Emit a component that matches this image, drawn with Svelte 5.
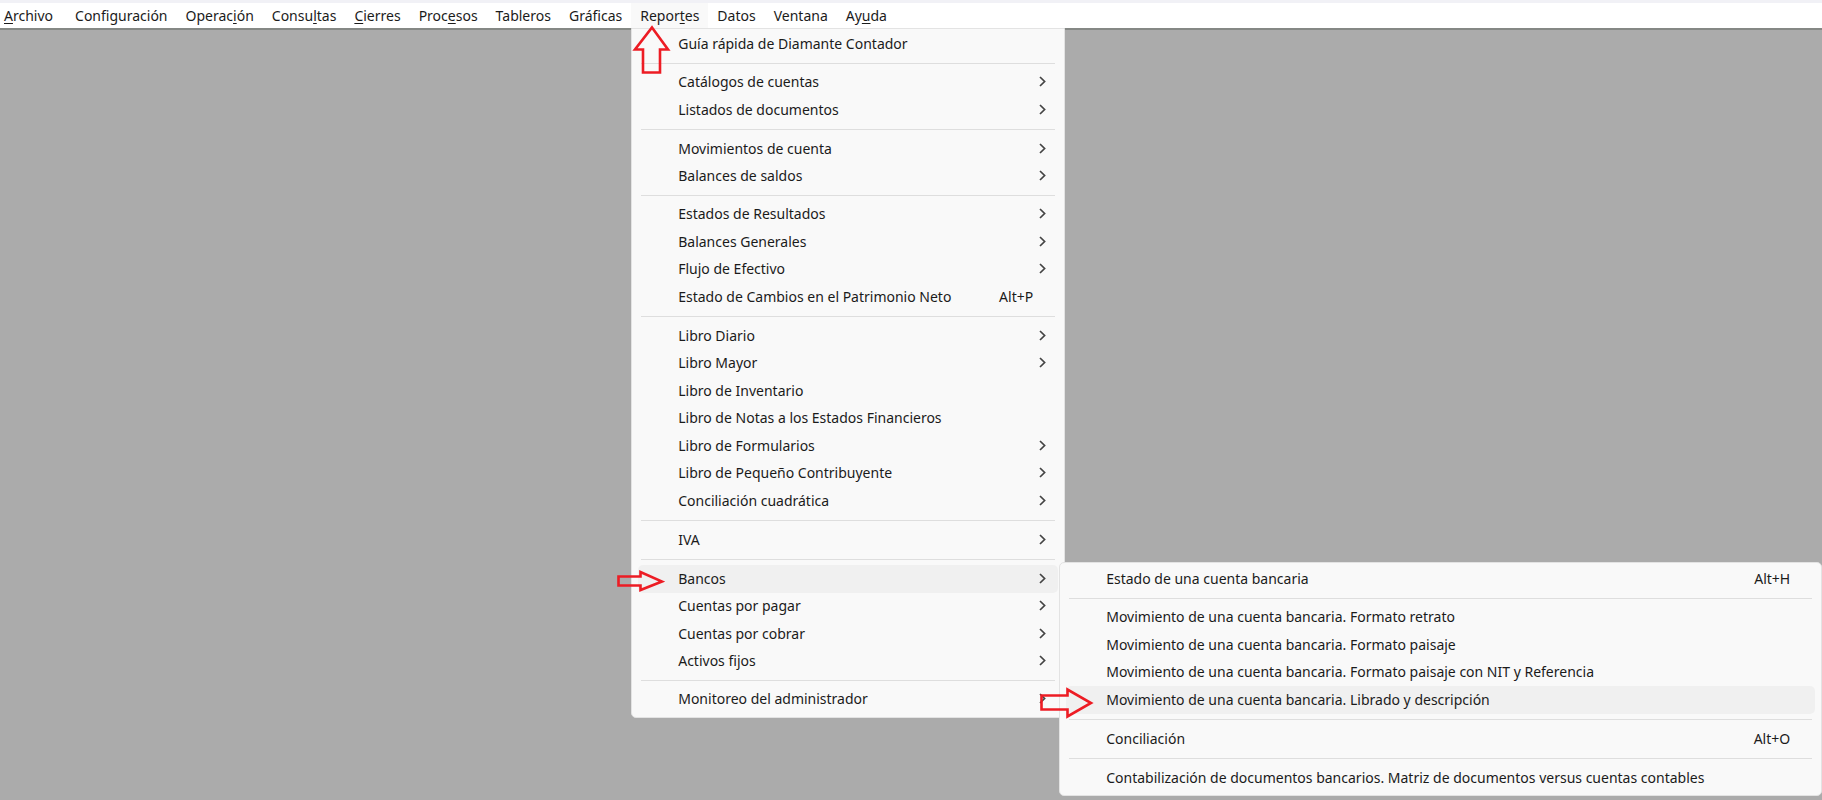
<script lang="ts">
  interface BarItem {
    label: string;
    key?: number;
  }

  interface Entry {
    label?: string;
    shortcut?: string;
    arrow?: boolean;
    children?: Entry[];
  }

  // key is the index of the underlined access letter
  const bar: BarItem[] = [
    {label: 'Archivo', key: 0},
    {label: 'Configuración'},
    {label: 'Operación', key: 6},
    {label: 'Consultas', key: 5},
    {label: 'Cierres', key: 0},
    {label: 'Procesos', key: 4},
    {label: 'Tableros'},
    {label: 'Gráficas'},
    {label: 'Reportes', key: 5},
    {label: 'Datos'},
    {label: 'Ventana'},
    {label: 'Ayuda', key: 2}
  ];

  // An entry without a label is a separator
  const bancos: Entry[] = [
    {label: 'Estado de una cuenta bancaria', shortcut: 'Alt+H'},
    {},
    {label: 'Movimiento de una cuenta bancaria. Formato retrato'},
    {label: 'Movimiento de una cuenta bancaria. Formato paisaje'},
    {label: 'Movimiento de una cuenta bancaria. Formato paisaje con NIT y Referencia'},
    {label: 'Movimiento de una cuenta bancaria. Librado y descripción'},
    {},
    {label: 'Conciliación', shortcut: 'Alt+O'},
    {},
    {label: 'Contabilización de documentos bancarios. Matriz de documentos versus cuentas contables'}
  ];

  const reportes: Entry[] = [
    {label: 'Guía rápida de Diamante Contador'},
    {},
    {label: 'Catálogos de cuentas', arrow: true},
    {label: 'Listados de documentos', arrow: true},
    {},
    {label: 'Movimientos de cuenta', arrow: true},
    {label: 'Balances de saldos', arrow: true},
    {},
    {label: 'Estados de Resultados', arrow: true},
    {label: 'Balances Generales', arrow: true},
    {label: 'Flujo de Efectivo', arrow: true},
    {label: 'Estado de Cambios en el Patrimonio Neto', shortcut: 'Alt+P'},
    {},
    {label: 'Libro Diario', arrow: true},
    {label: 'Libro Mayor', arrow: true},
    {label: 'Libro de Inventario'},
    {label: 'Libro de Notas a los Estados Financieros'},
    {label: 'Libro de Formularios', arrow: true},
    {label: 'Libro de Pequeño Contribuyente', arrow: true},
    {label: 'Conciliación cuadrática', arrow: true},
    {},
    {label: 'IVA', arrow: true},
    {},
    {label: 'Bancos', arrow: true, children: bancos},
    {label: 'Cuentas por pagar', arrow: true},
    {label: 'Cuentas por cobrar', arrow: true},
    {label: 'Activos fijos', arrow: true},
    {},
    {label: 'Monitoreo del administrador', arrow: true}
  ];

  let openMenu = $state('Reportes');
  let activeEntry = $state('Bancos');
  let activeChild = $state('Movimiento de una cuenta bancaria. Librado y descripción');

  function toggleMenu(label: string) {
    openMenu = openMenu === label ? '' : label;
  }
</script>

{#snippet rowContent(entry: Entry)}
  <span class="row__label">{entry.label}</span>
  {#if entry.shortcut}
    <span class="row__shortcut">{entry.shortcut}</span>
  {/if}
  <span class="row__end">
    {#if entry.arrow}
      <svg class="chevron" viewBox="0 0 7 11" aria-hidden="true">
        <path d="M1 1L5.6 5.5L1 10" />
      </svg>
    {/if}
  </span>
{/snippet}

<div class="window">
  <nav class="menubar">
    <ul class="menubar__list">
      {#each bar as item}
        <li class="menubar__item">
          <button
            type="button"
            class="menubar__button"
            class:menubar__button--open={item.label === openMenu}
            onclick={() => toggleMenu(item.label)}
          >{#if item.key === undefined}{item.label}{:else}{item.label.slice(0, item.key)}<u>{item.label[item.key]}</u>{item.label.slice(item.key + 1)}{/if}</button>

          {#if item.label === 'Reportes' && openMenu === 'Reportes'}
            <ul class="panel panel--main">
              {#each reportes as entry}
                {#if entry.label}
                  <li class="panel__item">
                    <button
                      type="button"
                      class="row"
                      class:row--active={entry.label === activeEntry}
                      onclick={() => (activeEntry = entry.label ?? '')}
                    >
                      {@render rowContent(entry)}
                    </button>

                    {#if entry.children && entry.label === activeEntry}
                      <ul class="panel panel--sub">
                        {#each entry.children as child}
                          {#if child.label}
                            <li class="panel__item">
                              <button
                                type="button"
                                class="row"
                                class:row--active={child.label === activeChild}
                                onclick={() => (activeChild = child.label ?? '')}
                              >
                                {@render rowContent(child)}
                              </button>
                              {#if child.label === activeChild}
                                <svg class="pointer pointer--child" viewBox="0 0 54 32" aria-hidden="true">
                                  <path d="M1.5 8.5H27.5V2.5L51 16L27.5 29.5V22.5H1.5Z" />
                                </svg>
                              {/if}
                            </li>
                          {:else}
                            <li class="panel__separator" role="separator"></li>
                          {/if}
                        {/each}
                      </ul>
                      <svg class="pointer pointer--entry" viewBox="0 0 48 22" aria-hidden="true">
                        <path d="M1.5 6.5H23.5V2L45 11.5L23.5 20V15.5H1.5Z" />
                      </svg>
                    {/if}
                  </li>
                {:else}
                  <li class="panel__separator" role="separator"></li>
                {/if}
              {/each}
            </ul>
            <svg class="pointer pointer--menu" viewBox="0 0 40 50" aria-hidden="true">
              <path d="M20 2.5L36 24.5H28V47.5H11V24.5H3Z" />
            </svg>
          {/if}
        </li>
      {/each}
    </ul>
  </nav>
</div>

<style>
  :global(body) {
    margin: 0;
    background: #ababab;
  }

  .window {
    min-height: 100vh;
    background: #ababab;
    color: #1b1b1b;
    font-family: "Noto Sans", "Open Sans", sans-serif;
    font-size: 14px;
  }

  .menubar {
    background: #fff;
    border-top: 3px solid #f1f1f6;
    border-bottom: 2px solid #858885;
  }

  ul {
    list-style: none;
    margin: 0;
    padding: 0;
  }

  button {
    border: 0;
    background: none;
    color: inherit;
    font: inherit;
    text-align: left;
    white-space: nowrap;
  }

  .menubar__list {
    display: flex;
  }

  .menubar__item {
    position: relative;
  }

  .menubar__button {
    display: block;
    height: 25px;
    padding: 0 9px;
    line-height: 23px;
  }

  .menubar__item:first-child .menubar__button {
    padding-left: 4px;
    padding-right: 13px;
  }

  .menubar__button--open {
    background: #f9f9f9;
  }

  u {
    text-underline-offset: 2px;
  }

  .panel {
    position: absolute;
    box-sizing: border-box;
    padding: 3px 6px;
    border: 1px solid #e3e3e3;
    border-radius: 5px;
    background: #f9f9f9;
  }

  .panel--main {
    top: 100%;
    left: 0;
    width: 434px;
    padding: 2px 6px 4px;
    border-top-left-radius: 0;
    border-top-right-radius: 0;
    z-index: 1;
  }

  .panel--sub {
    top: -3px;
    left: calc(100% + 1px);
    width: 763px;
    z-index: 2;
  }

  .panel__item {
    position: relative;
    height: 27px;
  }

  .panel__item:nth-child(even) {
    height: 28px;
  }

  .panel__separator {
    height: 1px;
    margin: 5px 3px;
    background: #dedede;
  }

  .row {
    display: flex;
    align-items: center;
    width: 100%;
    height: 100%;
    padding: 0 0 2px 40px;
    border-radius: 5px;
  }

  .row:hover,
  .row--active {
    background: #f0f0f0;
  }

  .row__label {
    flex: 1;
  }

  .row__end {
    display: flex;
    box-sizing: border-box;
    width: 25px;
    padding-left: 6px;
  }

  .chevron {
    width: 7px;
    height: 11px;
    fill: none;
    stroke: #444;
    stroke-width: 1.7;
  }

  .pointer {
    position: absolute;
    fill: none;
    stroke: #ed1c24;
    stroke-width: 2.6;
    pointer-events: none;
    z-index: 3;
  }

  .pointer--menu {
    top: 22px;
    left: 1px;
    width: 40px;
    height: 50px;
  }

  .pointer--entry {
    top: 5px;
    left: -21px;
    width: 48px;
    height: 22px;
  }

  .pointer--child {
    top: 1px;
    left: -26px;
    width: 54px;
    height: 32px;
  }
</style>
